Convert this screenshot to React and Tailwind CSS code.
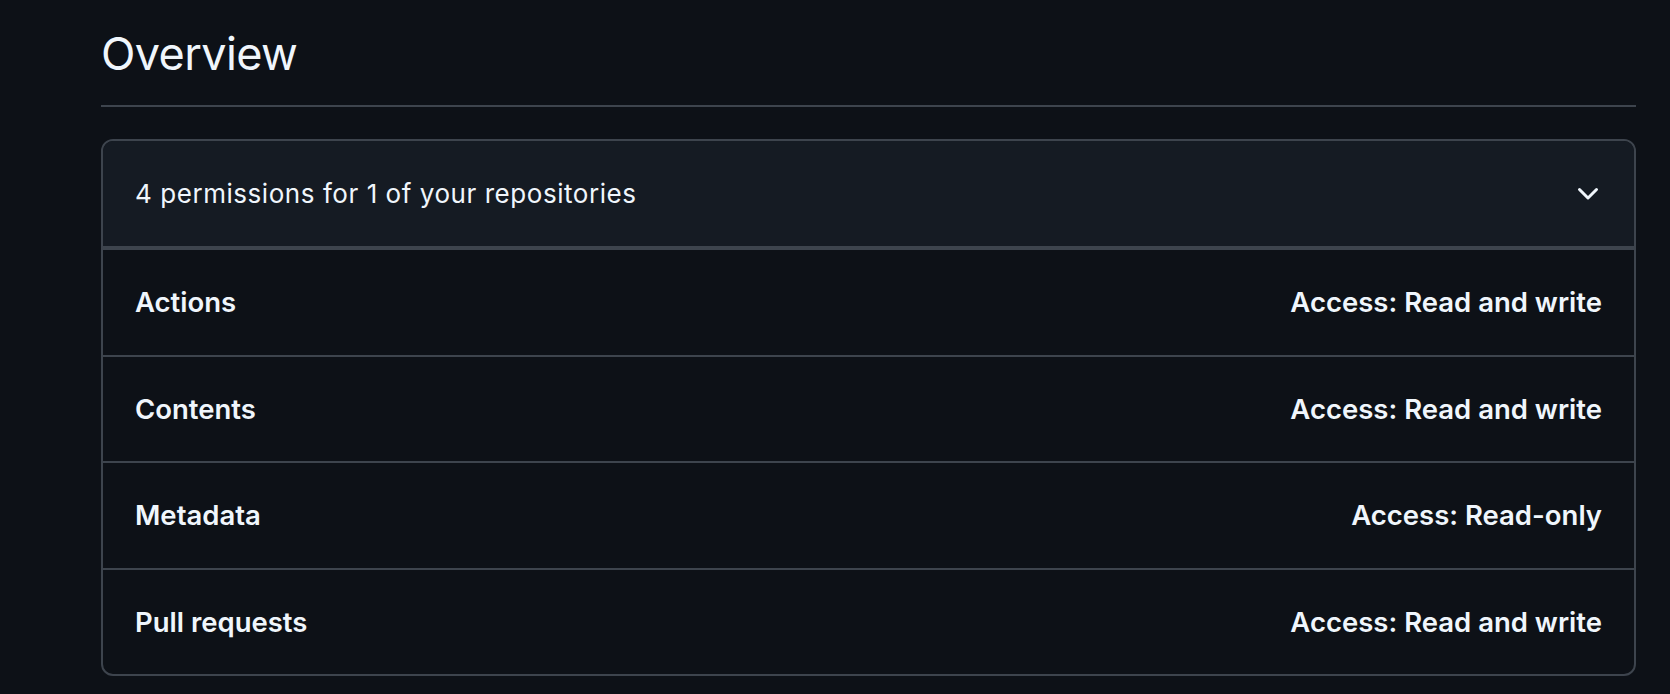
import React from 'react';

const permissions = [
  { name: 'Actions', access: 'Read and write' },
  { name: 'Contents', access: 'Read and write' },
  { name: 'Metadata', access: 'Read-only' },
  { name: 'Pull requests', access: 'Read and write' },
];

const ChevronDown = () => (
  <svg width="32" height="32" viewBox="0 0 16 16" fill="#f0f6fc">
    <path d="M12.78 5.22a.749.749 0 0 1 0 1.06l-4.25 4.25a.749.749 0 0 1-1.06 0L3.22 6.28a.749.749 0 1 1 1.06-1.06L8 8.939l3.72-3.719a.749.749 0 0 1 1.06 0Z" />
  </svg>
);

export default function App() {
  return (
    <div
      className="min-h-[694px] bg-[#0d1117] text-[#f0f6fc] pl-[101px] pr-[34px]"
      style={{ fontFamily: 'Inter, "Noto Sans", "Liberation Sans", sans-serif' }}
    >
      <div className="pt-[18px] pb-[15px] border-b-2 border-[#3d444d]">
        <h2 className="text-[45px] leading-[72px] font-normal tracking-[-0.6px]">Overview</h2>
      </div>

      <div className="mt-8 rounded-xl border-2 border-[#3d444d] overflow-hidden">
        <div className="flex items-center justify-between bg-[#151b23] border-b-4 border-[#3d444d] px-8 pt-[32px] pb-[32px]">
          <span className="text-[26px] leading-[41px] tracking-[0.55px]">4 permissions for 1 of your repositories</span>
          <span className="mr-[-2px]">
            <ChevronDown />
          </span>
        </div>
        {permissions.map((p, i) => (
          <div
            key={p.name}
            className={`flex items-center justify-between px-8 py-8 ${i > 0 ? 'border-t-2 border-[#3d444d]' : ''}`}
          >
            <span className="text-[27.5px] leading-[40.5px] font-semibold">{p.name}</span>
            <span className="text-[27.5px] leading-[40.5px] font-semibold">Access: {p.access}</span>
          </div>
        ))}
      </div>
    </div>
  );
}
